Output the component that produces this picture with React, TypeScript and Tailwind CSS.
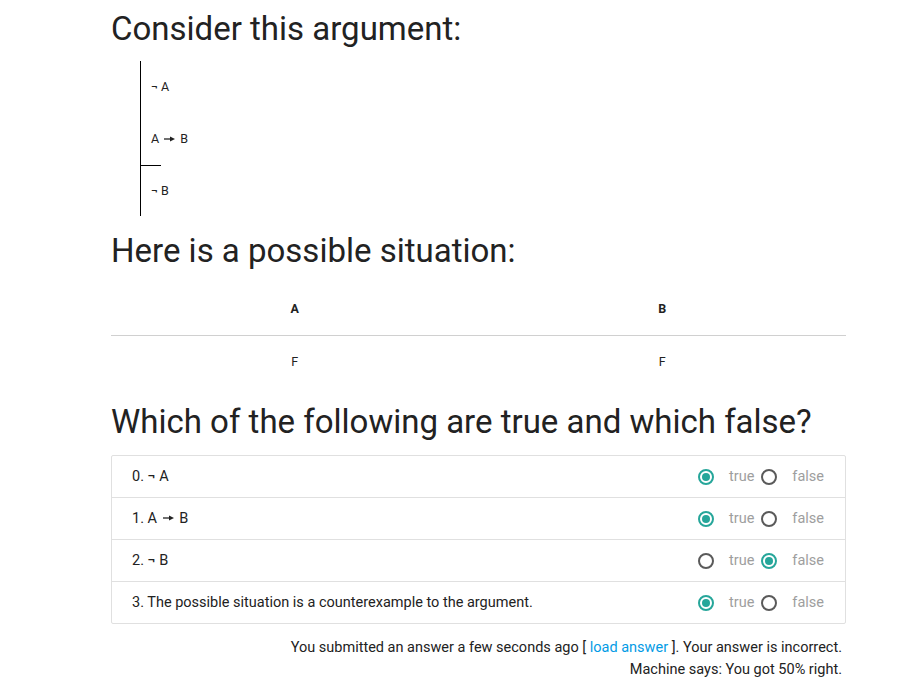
import React from "react";

const Radio = ({ on }: { on: boolean }) =>
  on ? (
    <span className="inline-flex w-4 h-4 rounded-full border-2 border-[#26a69a] items-center justify-center">
      <span className="w-2 h-2 rounded-full bg-[#26a69a]" />
    </span>
  ) : (
    <span className="inline-block w-4 h-4 rounded-full border-2 border-[#5a5a5a]" />
  );

const Arrow = () => (
  <svg width="11" height="8" viewBox="0 0 11 8" className="inline-block align-middle mx-[2px] relative -top-[1px]">
    <line x1="0" y1="4" x2="7" y2="4" stroke="#222" strokeWidth="1.3" />
    <polygon points="6,1.6 11,4 6,6.4" fill="#222" />
  </svg>
);

const rows: [React.ReactNode, boolean][] = [
  ["0. ¬ A", true],
  [<>1. A <Arrow /> B</>, true],
  ["2. ¬ B", false],
  ["3. The possible situation is a counterexample to the argument.", true],
];

export default function App() {
  return (
    <div className="bg-white w-[922px] h-[692px] text-[#222]" style={{ fontFamily: "Roboto, sans-serif" }}>
      <div className="ml-[111px] w-[735px]">
        <h1 className="text-[33px] leading-[40px] pt-[9px]">Consider this argument:</h1>
        <div className="ml-[29px] mt-[12px] w-fit border-l border-black text-[12.5px]">
          <div className="pl-[10px] pt-[18px] h-[52px] leading-[16px]">¬ A</div>
          <div className="pl-[10px] pt-[18px] h-[53px] leading-[16px] border-b border-black w-[20px] whitespace-nowrap">
            A <Arrow /> B
          </div>
          <div className="pl-[10px] pt-[17px] h-[50px] leading-[16px]">¬ B</div>
        </div>
        <h2 className="text-[33px] leading-[40px] mt-[15px]">Here is a possible situation:</h2>
        <div className="mt-[23px] grid grid-cols-2 text-[12.5px]">
          <div className="text-center font-bold h-[42px] leading-[30px] border-b border-[#d0d0d0]">A</div>
          <div className="text-center font-bold h-[42px] leading-[30px] border-b border-[#d0d0d0]">B</div>
          <div className="text-center h-[40px] leading-[52px]">F</div>
          <div className="text-center h-[40px] leading-[52px]">F</div>
        </div>
        <h3 className="text-[33px] leading-[40px] mt-[26px]">Which of the following are true and which false?</h3>
        <div className="mt-[13px] border border-[#e0e0e0] rounded-[2px] text-[14.5px]">
          {rows.map(([label, t], i) => (
            <div
              key={i}
              className={`flex items-center pl-[20px] pr-[21px] ${i < 3 ? "h-[42px] border-b border-[#e0e0e0]" : "h-[41px]"}`}
            >
              <span className="flex-1">{label}</span>
              <span className="flex items-center">
                <Radio on={t} />
                <span className="ml-[15px] mr-[7px] text-[#9e9e9e]">true</span>
                <Radio on={!t} />
                <span className="ml-[15px] text-[#9e9e9e]">false</span>
              </span>
            </div>
          ))}
        </div>
        <div className="text-right text-[14.5px] pr-[4px] mt-[13px] leading-[22px]">
          <div>
            You submitted an answer a few seconds ago [ <span className="text-[#039be5]">load answer</span> ]. Your
            answer is incorrect.
          </div>
          <div>Machine says: You got 50% right.</div>
        </div>
      </div>
    </div>
  );
}
